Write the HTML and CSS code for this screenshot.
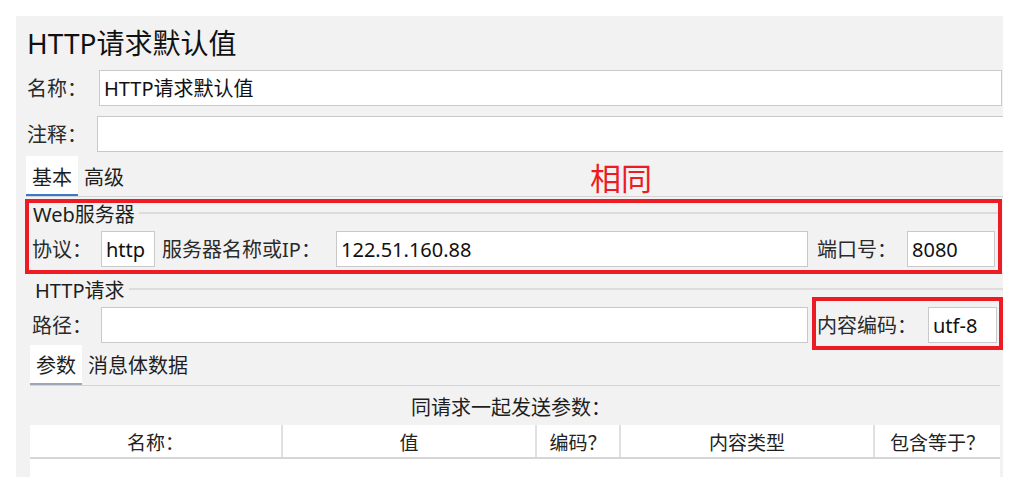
FILE: index.html
```html
<!DOCTYPE html>
<html lang="zh-CN">
<head>
<meta charset="utf-8">
<title>HTTP请求默认值</title>
<link rel="stylesheet" href="styles.css">
</head>
<body>
<div class="panel">
  <div class="title">HTTP请求默认值</div>

  <div class="row row-name">
    <span class="lbl lbl-name">名称：</span>
    <div class="field grow">HTTP请求默认值</div>
  </div>

  <div class="row row-comment">
    <span class="lbl lbl-comment">注释：</span>
    <div class="field grow overflow"></div>
  </div>

  <div class="tabs main-tabs">
    <div class="tab active">基本</div>
    <div class="tab">高级</div>
    <span class="note">相同</span>
  </div>

  <section class="red-box web-group">
    <div class="legend"><span class="legend-text">Web服务器</span><i class="legend-line"></i></div>
    <div class="row">
      <span class="lbl lbl-proto">协议：</span>
      <div class="field f-proto">http</div>
      <span class="lbl lbl-server">服务器名称或IP：</span>
      <div class="field f-server">122.51.160.88</div>
      <span class="lbl lbl-port">端口号：</span>
      <div class="field f-port">8080</div>
    </div>
  </section>

  <section class="http-group">
    <div class="legend"><span class="legend-text">HTTP请求</span><i class="legend-line"></i></div>
    <div class="row">
      <span class="lbl lbl-path">路径：</span>
      <div class="field f-path"></div>
      <div class="red-box enc-box">
        <span class="lbl lbl-enc">内容编码：</span>
        <div class="field f-enc">utf-8</div>
      </div>
    </div>
  </section>

  <div class="tabs sub-tabs">
    <div class="tab active">参数</div>
    <div class="tab">消息体数据</div>
  </div>

  <div class="caption">同请求一起发送参数：</div>

  <div class="table">
    <div class="thead">
      <div class="th">名称：</div>
      <div class="th">值</div>
      <div class="th">编码？</div>
      <div class="th">内容类型</div>
      <div class="th">包含等于？</div>
    </div>
    <div class="tbody"></div>
  </div>
</div>
</body>
</html>
```

FILE: styles.css
```css
* { box-sizing: border-box; }

html, body {
  margin: 0;
  background: #ffffff;
}

body {
  font-family: "Noto Sans", "Noto Sans CJK SC", sans-serif;
  color: #1e1e1e;
  font-size: 20px;
}

.panel {
  margin: 16px 0 0 16px;
  width: 987px;
  height: 461px;
  background: #f2f2f2;
  padding-left: 11px;
  overflow: hidden;
  display: flex;
  flex-direction: column;
}

.title {
  padding-top: 9px;
  height: 45px;
  line-height: 36px;
  font-size: 28px;
  color: #111;
}

.row {
  display: flex;
  align-items: center;
  height: 36px;
}

.row-name { margin-top: 9px; }
.row-comment { margin-top: 10px; }

.lbl {
  flex: none;
  white-space: nowrap;
  color: #2a2a2a;
  height: 36px;
  padding-top: 2px;
  line-height: 34px;
}

.lbl-name { width: 72px; }
.lbl-comment { width: 70px; }

.field {
  flex: none;
  height: 36px;
  background: #ffffff;
  border: 1px solid #c9c9c9;
  padding: 2px 0 0 4px;
  line-height: 32px;
  white-space: nowrap;
  color: #111;
}

.grow { flex: 1; margin-right: 1px; }
.overflow { margin-right: -20px; }

/* tabs */
.tabs {
  position: relative;
  display: flex;
  align-items: flex-end;
  border-bottom: 1px solid #d4d4d4;
}

.tab {
  padding: 5px 6px 0;
  line-height: 33px;
  color: #1e1e1e;
  border-bottom: 2px solid transparent;
}

.tab.active { background: #ffffff; }

.main-tabs {
  margin-top: 5px;
  margin-left: -1px;
  height: 40px;
}
.main-tabs .tab.active { border-bottom-color: #3a78c9; }

.note {
  position: absolute;
  left: 564px;
  top: 3px;
  font-size: 31px;
  line-height: 34px;
  color: #ed1c24;
  font-family: "Noto Sans CJK SC", sans-serif;
}

.sub-tabs {
  margin-top: 2px;
  margin-left: 3px;
  margin-right: 3px;
  height: 41px;
}
.sub-tabs .tab { line-height: 34px; padding-top: 4px; }
.sub-tabs .tab.active { border-bottom-color: #9ba6b6; }

/* groups */
.red-box { border: 4px solid #ed1c24; }

.web-group {
  margin-top: 2px;
  margin-left: -2px;
  width: 977px;
  height: 75px;
  padding: 0 0 2px 3px;
}

.legend {
  display: flex;
  align-items: center;
  height: 22px;
  line-height: 22px;
}

.legend-text {
  flex: none;
  padding: 0 4px 0 1px;
  color: #1e1e1e;
}

.legend-line {
  flex: 1;
  height: 2px;
  margin-top: -4px;
  background: #dcdcdc;
}

.web-group .legend { margin-top: 1px; }
.web-group .row { margin-top: 5px; }

.lbl-proto { width: 69px; }
.f-proto { width: 54px; }
.lbl-server { width: 181px; padding-left: 7px; }
.f-server { width: 472px; }
.lbl-port { width: 99px; padding-left: 9px; }
.f-port { width: 88px; }

.http-group {
  margin-top: 5px;
  padding-left: 5px;
}
.http-group .legend { margin-left: 2px; margin-top: 1px; }
.http-group .row { margin-top: 5px; }

.lbl-path { width: 69px; }
.f-path { width: 707px; }

.enc-box {
  display: flex;
  align-items: center;
  margin: -10px 0 -7px 4px;
  width: 191px;
  padding: 6px 2px 3px 1px;
}
.lbl-enc { width: 111px; }
.f-enc { width: 69px; }

/* table */
.caption {
  height: 39px;
  padding-top: 4px;
  line-height: 35px;
  text-align: center;
  padding-right: 8px;
  color: #1e1e1e;
}

.table {
  flex: 1;
  margin-left: 3px;
  width: 970px;
  display: flex;
  flex-direction: column;
  background: #ffffff;
}

.thead {
  display: grid;
  grid-template-columns: 253px 254px 84px 254px 125px;
  height: 34px;
  border-bottom: 2px solid #d6d6d6;
}

.th {
  text-align: center;
  padding-top: 2px;
  line-height: 30px;
  font-size: 19px;
  font-family: "Noto Sans CJK SC", sans-serif;
  color: #222;
  border-right: 2px solid #e0e0e0;
}
.th:last-child { border-right: none; }

.tbody { flex: 1; }
```
